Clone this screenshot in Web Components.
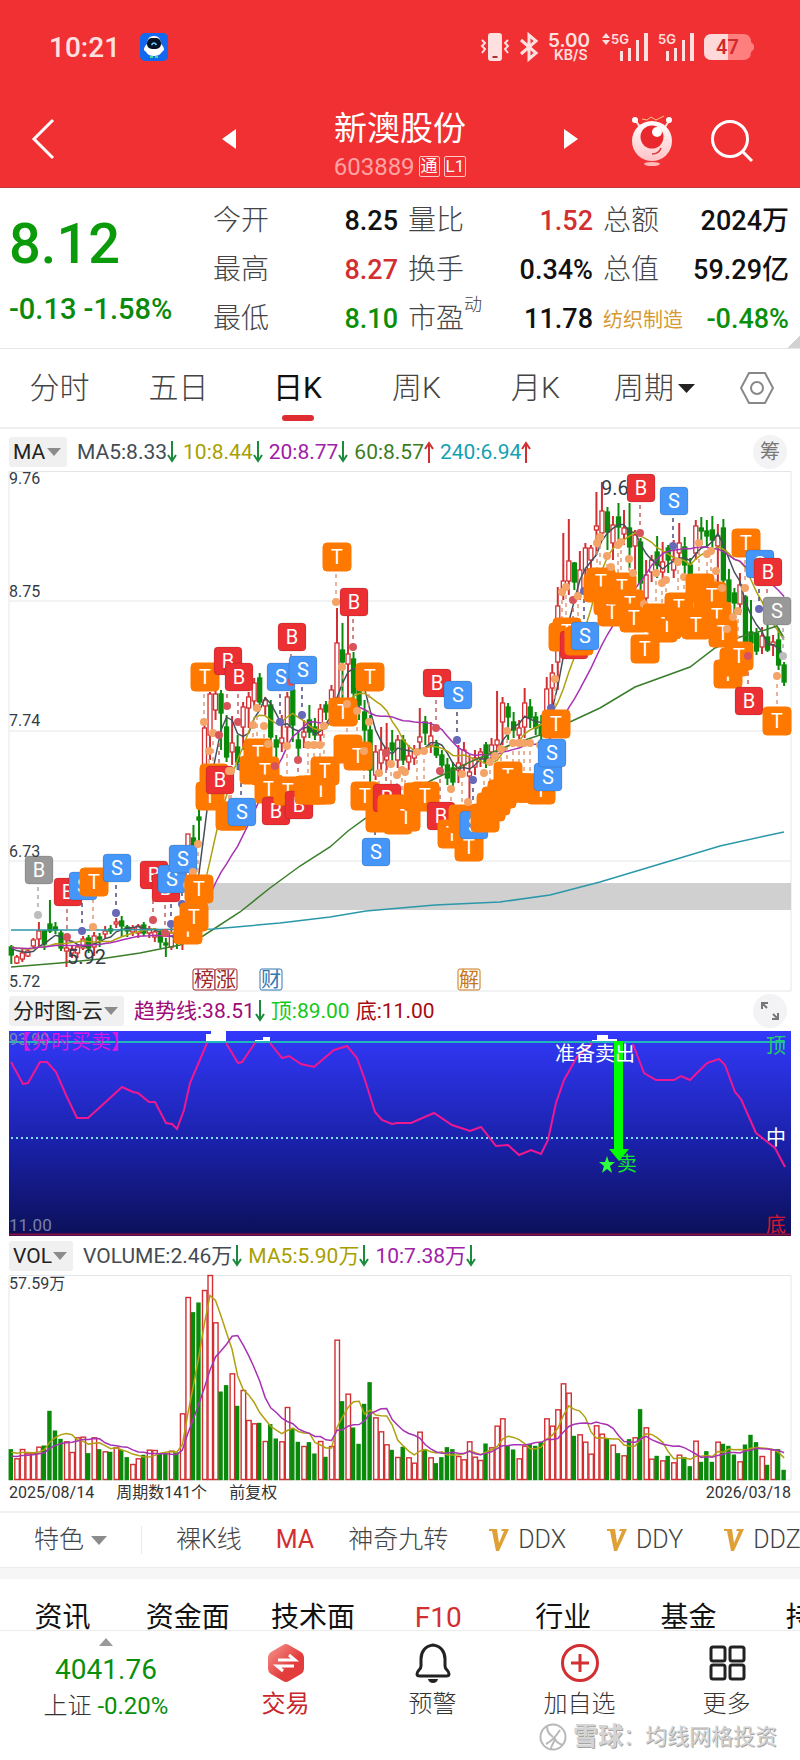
<!DOCTYPE html>
<html lang="zh-CN">
<head>
<meta charset="utf-8">
<meta name="viewport" content="width=device-width, initial-scale=1">
<title>新澳股份 603889</title>
<style>
  body { margin: 0; background: #fff; color: #111; font-family: Roboto, "Noto Sans CJK SC", sans-serif; }
</style>
</head>
<body>

<status-bar></status-bar>
<stock-header code="603889">新澳股份</stock-header>
<quote-panel></quote-panel>
<period-tabs></period-tabs>

<indicator-bar name="MA">
  <indicator-value color="#444b52" dir="down">MA5:8.33</indicator-value>
  <indicator-value color="#a8a000" dir="down">10:8.44</indicator-value>
  <indicator-value color="#a020a8" dir="down">20:8.77</indicator-value>
  <indicator-value color="#3a7d1e" dir="up">60:8.57</indicator-value>
  <indicator-value color="#149fb4" dir="up">240:6.94</indicator-value>
  <round-button slot="action" label="筹码分布">筹</round-button>
</indicator-bar>
<candle-chart></candle-chart>

<indicator-bar name="分时图-云">
  <indicator-value color="#a00a78" dir="down">趋势线:38.51</indicator-value>
  <indicator-value color="#14c81e">顶:89.00</indicator-value>
  <indicator-value color="#a80a14">底:11.00</indicator-value>
  <round-button slot="action" label="全屏">
    <svg width="18" height="18" viewBox="0 0 18 18" fill="none" stroke="#777" stroke-width="2"><path d="M1 7V1h6M1 1l5 5M17 11v6h-6M17 17l-5-5"/></svg>
  </round-button>
</indicator-bar>
<trend-chart></trend-chart>

<indicator-bar name="VOL">
  <indicator-value color="#444b52" dir="down">VOLUME:2.46万</indicator-value>
  <indicator-value color="#a8a000" dir="down">MA5:5.90万</indicator-value>
  <indicator-value color="#a020a8" dir="down">10:7.38万</indicator-value>
</indicator-bar>
<volume-chart></volume-chart>

<feature-bar></feature-bar>
<info-tabs></info-tabs>
<bottom-nav></bottom-nav>

<script>
const RED = '#d22f33';
const GREEN = '#0a8a0a';

// Clase base: mete la plantilla en el shadow root
class BaseElement extends HTMLElement {
  constructor() {
    super();
    this.attachShadow({ mode: 'open' });
  }
  connectedCallback() {
    this.shadowRoot.innerHTML = `<style>
        :host { display: block; }
        * { box-sizing: border-box; }
        button, select { appearance: none; border: 0; margin: 0; padding: 0; background: none; color: inherit; font: inherit; line-height: inherit; cursor: pointer; }
        svg { display: block; overflow: visible; }
      </style>` + this.render();
  }
}

const caret = (w, h, color) =>
  `<svg width="${w}" height="${h}" viewBox="0 0 14 10" preserveAspectRatio="none"><path d="M0 0h14l-7 10z" fill="${color}"/></svg>`;

// **********************************************************************
// => Barra de estado

customElements.define('status-bar', class extends BaseElement {
  render() {
    return `<style>
        :host { background: #f03033; color: #ffe0e0; height: 94px; display: flex; align-items: center; justify-content: space-between; padding: 0 46px 0 49px; box-sizing: border-box; }
        div { display: flex; align-items: center; }
        .left { gap: 20px; }
        .right { gap: 10px; }
        time { font-size: 28px; font-weight: 500; }
        text { font-family: Inter, sans-serif; font-weight: 600; fill: #ffe0e0; }
      </style>
      <div class="left">
        <time>10:21</time>
        <svg width="28" height="28" viewBox="0 0 28 28"><rect width="28" height="28" rx="5" fill="#1268ee"/><path d="M14 3c-6 0-7 5-7 8-3 3-4 6-2 7 1 0 2 5 9 5s8-5 9-5c2-1 1-4-2-7 0-3-1-8-7-8z" fill="#fff"/><rect x="7" y="5" width="14" height="11" rx="5" fill="#061226"/><path d="M11.500 12q2.500-4 5 0" stroke="#5fd0ff" stroke-width="1.500" fill="none"/><path d="M10 24h3M15 24h3" stroke="#46d7a0" stroke-width="2"/></svg>
      </div>
      <div class="right">
        <svg width="29" height="28" viewBox="0 0 29 28" fill="none" stroke="#ffe0e0" stroke-width="2"><rect x="7" y="0" width="14" height="28" rx="3" fill="#ffe0e0" stroke="none"/><path d="M11.500 24h5" stroke="#a33"/><path d="M1 7l3 3-3 3 3 3-3 4M27 7l-3 3 3 3-3 3 3 4"/></svg>
        <svg width="18" height="28" viewBox="0 0 18 28" fill="none" stroke="#ffe0e0" stroke-width="3"><path d="M1 7l15 13-7 6V2l7 6L1 21"/></svg>
        <svg width="44" height="28" viewBox="0 0 44 28"><text x="0" y="14" font-size="19">5.00</text><text x="6" y="27" font-size="14">KB/S</text></svg>
        <svg width="46" height="28" viewBox="0 0 46 28" fill="#ffe0e0"><path d="M0 5l4-5 4 5zM0 7h8l-4 5z"/><text x="9" y="11" font-size="13">5G</text><path d="M18 18h3v10h-3zM26 15h3v13h-3zM34 7h3v21h-3zM42 0h4v28h-4z"/></svg>
        <svg width="36" height="28" viewBox="0 0 36 28" fill="#ffe0e0"><text x="0" y="11" font-size="13">5G</text><path d="M8 18h3v10H8zM16 15h3v13h-3zM24 7h3v21h-3zM32 0h4v28h-4z"/></svg>
        <svg width="50" height="26" viewBox="0 0 50 26"><path d="M8 0h31q8 0 8 8l3 3v4l-3 3q0 8-8 8H8q-8 0-8-8V8q0-8 8-8z" fill="#ff7f7f"/><path d="M8 0h16v26H8q-8 0-8-8V8q0-8 8-8z" fill="#ffd9d9"/><text x="12" y="20" font-size="20" style="fill:#cf2a2e;font-family:Roboto">47</text></svg>
      </div>`;
  }
});

// **********************************************************************
// => Cabecera con el nombre del valor

customElements.define('stock-header', class extends BaseElement {
  render() {
    return `<style>
        :host { background: #f03033; color: #fff; height: 94px; display: grid; grid-template-columns: 205fr 390fr 205fr; align-items: center; border-bottom: 1px solid #c23a3c; box-sizing: border-box; }
        .back { padding-left: 32px; }
        .middle { display: flex; align-items: center; justify-content: space-between; padding: 0 17px; }
        .middle button { padding-bottom: 4px; }
        .title { padding-top: 8px; }
        .right { display: flex; justify-content: flex-end; gap: 38px; padding-right: 47px; }
        h1 { margin: 0; font-size: 33px; line-height: 44px; font-weight: 400; text-align: center; }
        p { margin: 0; display: flex; align-items: center; justify-content: center; gap: 4px; font-size: 24px; line-height: 32px; color: #ffa3a3; }
        p b { font-size: 17px; line-height: 19px; font-weight: 400; border: 1px solid #ffc4c4; color: #fff; border-radius: 2px; padding: 0 1px; }
      </style>
      <div class="back"><button aria-label="返回"><svg width="22" height="40" viewBox="0 0 22 40" fill="none" stroke="#fff" stroke-width="3"><path d="M21 1L2 20l19 19"/></svg></button></div>
      <div class="middle">
        <button aria-label="上一只"><svg width="14" height="20" viewBox="0 0 14 20"><path d="M14 0v20L0 10z" fill="#fff"/></svg></button>
        <div class="title"><h1><slot></slot></h1><p>${this.getAttribute('code')} <b>通</b><b>L1</b></p></div>
        <button aria-label="下一只"><svg width="14" height="20" viewBox="0 0 14 20"><path d="M0 0v20l14-10z" fill="#fff"/></svg></button>
      </div>
      <div class="right">
        <button aria-label="助手"><svg width="42" height="52" viewBox="0 0 42 52">
          <defs><linearGradient id="m" x2="0" y2="1"><stop offset="0" stop-color="#fff"/><stop offset="1" stop-color="#ffc2c6"/></linearGradient></defs>
          <path d="M5 6l4 6M38 6l-4 6" stroke="#ffe0e0" stroke-width="2"/><circle cx="4" cy="5" r="3" fill="#fff"/><circle cx="38" cy="5" r="3" fill="#fff"/>
          <path d="M11 4l5 1 4-3 5 3 8-4" stroke="#ffc080" fill="none"/>
          <circle cx="21" cy="26" r="20" fill="url(#m)"/><circle cx="21" cy="22" r="11.500" fill="#e8282c"/><circle cx="26" cy="17" r="5" fill="#fff"/>
          <path d="M21 39q7 0 9-6" stroke="#d8383c" fill="none" stroke-width="1.500"/><ellipse cx="21" cy="49" rx="8" ry="2" fill="#ffb9b9"/></svg></button>
        <button aria-label="搜索"><svg width="42" height="42" viewBox="0 0 42 42" fill="none" stroke="#fff" stroke-width="3"><circle cx="19" cy="19" r="17.500"/><path d="M31 31l10 10"/></svg></button>
      </div>`;
  }
});

// **********************************************************************
// => Panel de cotización

const QUOTES = [
  [['今开', '8.25', ''], ['最高', '8.27', 'up'], ['最低', '8.10', 'down']],
  [['量比', '1.52', 'up'], ['换手', '0.34%', ''], ['市盈<sup>动</sup>', '11.78', '']],
  [['总额', '2024万', ''], ['总值', '59.29亿', ''], ['<a href="#">纺织制造</a>', '-0.48%', 'down']]
];

customElements.define('quote-panel', class extends BaseElement {
  render() {
    return `<style>
        :host { display: grid; grid-template-columns: 194fr 185fr 185fr 186fr; column-gap: 10px; padding: 8px 11px 5px 9px; border-bottom: 1px solid #e6e6e6;
          background: linear-gradient(135deg, transparent 50%, #d2d2d2 50%) right bottom / 12px 12px no-repeat; }
        .price { color: #0a9a0a; }
        .price strong { display: block; font-size: 56px; line-height: 70px; padding-top: 13px; font-weight: 500; }
        .price span { display: block; font-size: 29px; line-height: 36px; padding-top: 12px; color: #0a8a0a; font-weight: 500; white-space: nowrap; }
        dl { margin: 0; }
        dl div { display: flex; align-items: center; justify-content: space-between; height: 49px; font-size: 28px; line-height: 36px; white-space: nowrap; }
        dt { color: #444; font-weight: 300; position: relative; }
        dd { margin: 0; font-weight: 500; color: #111; font-size: 27px; }
        sup { position: absolute; left: 100%; top: -8px; font-size: 18px; line-height: 24px; }
        a { color: #d79a32; font-size: 20px; text-decoration: none; font-weight: 400; }
        .up { color: ${RED}; } .down { color: #0a8f0a; }
      </style>
      <div class="price"><strong>8.12</strong><span>-0.13 -1.58%</span></div>
      ${QUOTES.map(col => `<dl>${col.map(([k, v, c]) => `<div><dt>${k}</dt><dd class="${c}">${v}</dd></div>`).join('')}</dl>`).join('')}`;
  }
});

// **********************************************************************
// => Pestañas de periodo

customElements.define('period-tabs', class extends BaseElement {
  render() {
    return `<style>
        :host { display: grid; grid-template-columns: repeat(6, 119fr) 86fr; height: 80px; border-bottom: 2px solid #f0f0f0; margin-bottom: 3px; box-sizing: border-box; align-items: stretch; }
        button, label { font-size: 30px; line-height: 40px; color: #444; font-weight: 300; display: flex; align-items: center; justify-content: center; gap: 4px; position: relative; }
        .on { color: #111; font-weight: 400; }
        .on::after { content: ""; position: absolute; left: 50%; margin-left: -16px; bottom: 6px; width: 32px; height: 6px; border-radius: 3px; background: #df2c30; }
      </style>
      <button>分时</button><button>五日</button><button class="on">日K</button><button>周K</button><button>月K</button>
      <label><select aria-label="周期"><option>周期</option></select>${caret(17, 9, '#222')}</label>
      <button aria-label="设置"><svg width="36" height="34" viewBox="0 0 36 34" fill="none" stroke="#888" stroke-width="2"><path d="M10 2h16l8 15-8 15H10L2 17z"/><circle cx="18" cy="17" r="6"/></svg></button>`;
  }
});

// **********************************************************************
// => Fila de indicador: selector + valores + botón

customElements.define('indicator-bar', class extends BaseElement {
  render() {
    const name = this.getAttribute('name');
    return `<style>
        :host { display: flex; align-items: center; height: 39px; padding: 0 13px 0 9px; font-size: 21px; line-height: 30px; color: #222; }
        label { display: flex; align-items: center; gap: 1px; background: #f0f0f0; border-radius: 3px; padding: 0 6px 0 4px; margin-right: 10px; }
        .values { display: flex; gap: 6px; flex: 1; }
      </style>
      <label><select aria-label="指标"><option>${name}</option></select>${caret(14, 8, '#8c8c8c')}</label>
      <div class="values"><slot></slot></div>
      <slot name="action"></slot>`;
  }
});

customElements.define('indicator-value', class extends BaseElement {
  render() {
    const dir = this.getAttribute('dir');
    const d = dir === 'up' ? 'M5 22V2M1 8l4-6 4 6' : 'M5 0v20M1 14l4 6 4-6';
    const arrow = dir ? `<svg width="10" height="22" viewBox="0 0 10 22" fill="none" stroke-width="2" stroke="${dir === 'up' ? '#d22f33' : '#1a8a3c'}"><path d="${d}"/></svg>` : '';
    return `<style>:host { display: flex; align-items: center; white-space: nowrap; color: ${this.getAttribute('color')}; }</style><slot></slot>${arrow}`;
  }
});

customElements.define('round-button', class extends BaseElement {
  render() {
    return `<style>button { width: 34px; height: 34px; border-radius: 17px; background: #f3f2f4; color: #777; font-size: 20px; display: flex; align-items: center; justify-content: center; }</style>
      <button aria-label="${this.getAttribute('label')}"><slot></slot></button>`;
  }
});

// **********************************************************************
// => Datos. Por vela: [color, cuerpo arriba, cuerpo abajo, máximo, mínimo, altura de volumen]

const BARS = [
  ['g',947,955,945,964,89], ['r',957,963,955,964,62], ['r',953,959,948,962,90], ['r',951,956,948,957,77], ['r',940,946,938,948,77],
  ['r',931,939,922,947,97], ['g',931,944,930,950,100], ['g',924,931,900,933,204], ['g',927,930,922,934,145], ['g',933,948,930,951,120],
  ['r',948,951,940,967,113], ['r',949,953,946,958,81], ['r',947,953,944,958,125], ['r',939,948,936,950,127], ['g',938,948,935,953,77],
  ['r',936,947,932,956,125], ['g',937,939,933,947,89], ['r',931,934,926,938,83], ['g',929,931,925,934,81], ['r',922,924,918,928,95],
  ['g',921,926,916,937,87], ['g',927,931,925,937,65], ['r',928,932,925,936,45], ['r',926,933,924,938,62], ['g',925,933,922,936,72],
  ['r',929,933,926,938,88], ['r',932,937,928,942,87], ['g',933,942,930,948,77], ['g',943,945,938,957,77], ['r',933,947,928,950,85],
  ['g',937,942,932,949,79], ['r',920,940,912,950,197], ['r',834,893,834,905,546], ['g',838,850,825,858,500], ['g',817,820,810,842,529],
  ['r',728,770,725,785,567], ['r',694,735,692,760,612], ['r',694,710,690,720,470], ['g',694,713,690,750,262], ['g',727,757,715,762,281],
  ['r',743,752,716,765,317], ['g',747,762,735,770,219], ['r',707,727,702,750,267], ['r',697,708,692,728,177], ['r',683,701,678,710,167],
  ['g',678,702,673,705,168], ['r',700,706,697,715,114], ['g',705,737,700,740,164], ['g',740,747,735,763,121], ['r',738,743,715,752,113],
  ['r',697,727,692,745,216], ['g',690,725,685,742,151], ['g',740,748,730,760,111], ['r',732,737,720,748,99], ['g',720,732,705,738,110],
  ['g',727,735,718,740,76], ['r',709,735,704,742,114], ['g',705,712,701,720,66], ['r',690,712,685,722,99], ['r',643,698,608,710,418],
  ['g',650,662,623,700,233], ['r',654,664,615,700,256], ['g',659,693,652,710,154], ['g',688,705,680,720,105], ['g',712,730,700,745,225],
  ['g',730,770,715,785,290], ['r',752,775,745,780,185], ['r',750,763,727,775,143], ['r',748,760,723,770,104], ['g',743,750,730,762,87],
  ['r',740,760,735,768,66], ['g',740,760,735,765,96], ['r',756,762,745,770,65], ['r',752,758,745,765,49], ['r',737,742,708,750,142],
  ['g',722,733,716,745,89], ['r',736,745,722,753,65], ['g',745,755,740,758,47], ['g',755,765,750,775,65], ['g',765,778,758,785,95],
  ['g',768,782,762,787,89], ['r',763,770,745,783,69], ['r',750,765,742,775,59], ['r',772,776,755,800,113], ['r',758,767,750,775,67],
  ['r',752,758,748,767,57], ['g',745,763,742,768,106], ['r',745,752,738,760,95], ['r',740,745,691,750,160], ['r',703,722,697,745,182],
  ['g',707,717,703,740,99], ['g',722,730,712,738,88], ['r',728,735,720,740,62], ['r',703,727,688,738,100], ['g',707,718,699,728,105],
  ['g',717,728,712,735,99], ['g',725,735,715,740,111], ['r',689,720,677,735,182], ['r',673,688,664,720,160], ['r',606,662,587,690,209],
  ['r',581,593,533,600,287], ['r',561,581,519,595,259], ['g',563,582,562,590,129], ['r',570,593,551,600,134], ['r',548,570,543,580,112],
  ['r',548,560,545,575,76], ['r',526,530,492,555,161], ['r',511,533,482,540,136], ['g',512,532,507,550,122], ['r',525,543,516,560,103],
  ['g',517,527,503,545,77], ['r',528,534,510,545,71], ['g',528,547,503,568,119], ['r',535,546,530,570,125], ['g',542,583,538,600,209],
  ['r',575,598,560,605,155], ['r',560,572,555,582,61], ['g',552,565,536,578,69], ['r',562,572,542,580,56], ['g',548,560,545,573,69],
  ['r',560,570,540,578,50], ['r',543,553,523,565,73], ['g',547,565,537,575,65], ['g',565,575,558,580,38], ['r',526,553,520,560,115],
  ['g',528,531,517,545,51], ['g',531,536,520,548,83], ['g',530,540,516,550,51], ['r',536,546,524,600,112], ['g',528,580,519,583,105],
  ['g',580,602,569,620,99], ['g',593,603,588,615,73], ['r',585,604,573,615,53], ['g',597,642,595,648,103], ['g',632,643,600,655,132],
  ['g',633,651,628,655,110], ['r',636,647,627,654,69], ['g',637,650,620,652,42], ['r',642,645,635,656,89], ['g',640,665,628,670,89],
  ['g',665,682,662,686,27]
];
const barX = i => 11.3 + i * 5.52;

// Señales: [x, y del punto, tipo, sentido]. T naranja (t sin letra), B rojo, S azul, b/s gris
const MARKS = [
  [38,915,'b',-1],[67,937,'B',-1],[82,931,'S',-1],[93,927,'T',-1],[116,913,'S',-1],[153,920,'B',-1],[165,933,'B',-1],[171,924,'S',-1],
  [182,904,'S',-1],[187,885,'T',1],[193,872,'T',1],[198,844,'T',1],[204,722,'T',-1],[209,751,'T',1],[213,733,'t',1],[219,735,'B',1],[227,706,'B',-1],
  [229,771,'t',1],[231,771,'t',1],[238,722,'B',-1],[241,767,'S',1],[253,725,'t',1],[257,708,'T',1],[264,726,'T',1],[268,744,'T',1],[275,766,'B',1],
  [280,722,'S',-1],[287,746,'T',1],[291,682,'B',-1],[298,760,'B',1],[302,715,'S',-1],[308,745,'t',1],[314,745,'t',1],[320,745,'T',1],[324,726,'T',1],
  [336,602,'T',-1],[342,667,'T',1],[347,704,'t',1],[353,647,'B',-1],[357,711,'T',1],[364,751,'T',1],[369,722,'T',-1],[375,807,'S',1],
  [379,773,'t',1],[386,753,'B',1],[391,764,'t',1],[397,775,'t',1],[402,770,'t',1],[405,772,'T',1],[417,752,'t',1],[424,751,'T',1],[436,728,'B',-1],
  [440,771,'B',1],[451,789,'T',1],[457,740,'S',-1],[462,774,'t',1],[468,802,'T',1],[473,780,'S',1],[484,773,'t',1],[490,762,'t',1],
  [495,756,'t',1],[501,749,'t',1],[507,731,'T',1],[513,743,'t',1],[519,743,'t',1],[524,743,'t',1],[530,743,'t',1],[540,745,'T',1],
  [547,732,'S',1],[551,708,'S',1],[555,679,'T',1],[562,592,'t',1],[566,587,'T',1],[573,600,'B',1],[578,596,'t',1],[584,591,'S',1],
  [597,543,'t',1],[600,537,'T',1],[607,556,'t',1],[611,567,'T',1],[618,545,'t',1],[621,542,'T',1],[629,559,'T',1],[633,573,'T',1],
  [640,533,'B',-1],[644,604,'T',1],[656,573,'t',1],[662,583,'t',1],[666,580,'T',1],[673,546,'S',-1],[678,562,'T',1],[684,577,'t',1],
  [695,580,'T',1],[699,543,'t',1],[707,554,'t',1],[711,551,'T',1],[716,571,'T',1],[722,588,'T',1],[727,629,'T',1],[733,617,'t',1],
  [738,611,'T',1],[745,588,'T',-1],[748,656,'B',1],[759,609,'S',-1],[767,617,'B',-1],[783,656,'s',-1],[777,676,'T',1]
];
const MARK_COLORS = {
  T: ['#ff7800', '#f5a468', '#e09a78'], B: ['#eb2f32', '#d8545c', '#c06060'], S: ['#4596f8', '#6868b8', '#4a4a80'],
  b: ['#999', '#bdbdbd', '#aaa'], s: ['#999', '#bdbdbd', '#aaa']
};
MARK_COLORS.t = MARK_COLORS.T;

// Media móvil sobre una serie ya en píxeles
function movingAverage(values, n, before) {
  return values.map((v, i) => {
    let sum = 0;
    for (let k = 0; k < n; k++) sum += i - k < 0 ? before : values[i - k];
    return sum / n;
  });
}
const line = (values, color) =>
  `<polyline fill="none" stroke="${color}" stroke-width="1.500" points="${values.map((v, i) => barX(i).toFixed(1) + ',' + v.toFixed(1)).join(' ')}"/>`;

// **********************************************************************
// => Gráfico de velas

customElements.define('candle-chart', class extends BaseElement {
  candles() {
    return BARS.map(([c, top, bottom, high, low], i) => {
      const x = barX(i);
      const color = c === 'r' ? RED : GREEN;
      return `<path d="M${x} ${high}V${low}" stroke="${color}" stroke-width="2"/>` +
        `<rect x="${x - 2}" y="${top}" width="4" height="${bottom - top}" fill="${c === 'r' ? '#fff' : color}" stroke="${color}" stroke-width="1.300"/>`;
    }).join('');
  }
  marks() {
    const stems = MARKS.map(([x, y, t, d]) => `<path d="M${x} ${y}v${d * 30}" stroke="${MARK_COLORS[t][2]}" stroke-width="1.500" stroke-dasharray="4 4"/>`);
    const tags = MARKS.map(([x, y, t, d]) => {
      const cx = Math.min(x + 1, 777), cy = y + d * 45;
      const edge = t === 'T' || t === 't' ? '#ff7800' : '#0002';
      return `<circle cx="${x}" cy="${y}" r="4" fill="${MARK_COLORS[t][1]}"/>` +
        `<rect x="${cx - 14}" y="${cy - 14}" width="28" height="28" rx="4" fill="${MARK_COLORS[t][0]}" stroke="${edge}"/>` +
        (t === 't' ? '' : `<text x="${cx}" y="${cy + 7}" class="tag">${t.toUpperCase()}</text>`);
    });
    return stems.join('') + tags.join('');
  }
  events() {
    return [['榜', 204, '#a02828'], ['涨', 226, '#a02828'], ['财', 271, '#2f78b4'], ['解', 469, '#c87818']].map(([t, x, c]) =>
      `<rect x="${x - 11}" y="969" width="22" height="21" rx="2" fill="#fff" stroke="${c}"/><text x="${x}" y="987" class="event" style="fill:${c}">${t}</text>`).join('');
  }
  render() {
    const close = BARS.map(b => b[0] === 'r' ? b[1] : b[2]);
    return `<style>
        svg { width: 100%; height: auto; }
        text { font-size: 16px; fill: #333b46; }
        .tag { font-size: 20px; fill: #fff; text-anchor: middle; }
        .event { font-size: 20px; text-anchor: middle; }
        .peak { font-size: 20px; }
      </style>
      <svg viewBox="0 471 800 520">
        <path d="M9 471.500H791V991H9zM9 601H791M9 731H791M9 861H791" fill="none" stroke="#e3e6e8"/>
        <rect x="205" y="883" width="586" height="27" fill="#d0d0d0"/>
        ${this.candles()}
        ${line(movingAverage(close, 5, 947), '#44505c')}
        ${line(movingAverage(close, 10, 946), '#b0a010')}
        ${line(movingAverage(close, 20, 947), '#a832b4')}
        <polyline fill="none" stroke="#3a7d2a" stroke-width="1.500" points="11,967 60,963 100,959 140,953 180,945 203,936 240,912 270,888 300,866 330,847 348,831 366,818 400,798 432,780 470,762 510,745 540,735 572,721 600,708 635,687 690,667 715,648 740,637 765,630 777,626 784,638"/>
        <polyline fill="none" stroke="#2a98a8" stroke-width="1.500" points="11,930 100,930 213,929 280,923 330,917 366,911 435,905 500,902 550,895 600,882 660,864 720,846 765,836 784,832"/>
        <text class="peak" x="601" y="495">9.6</text><text class="peak" x="67" y="964">5.92</text>
        ${this.marks()}
        <text x="9" y="484">9.76</text><text x="9" y="597">8.75</text><text x="9" y="726">7.74</text><text x="9" y="857">6.73</text><text x="9" y="987">5.72</text>
        ${this.events()}
      </svg>`;
  }
});

// **********************************************************************
// => Línea de tendencia sobre fondo azul

customElements.define('trend-chart', class extends BaseElement {
  render() {
    return `<style>
        svg { width: 100%; height: auto; }
        text { font-size: 20px; }
      </style>
      <svg viewBox="0 1030 800 206">
        <defs><linearGradient id="bg" x2="0" y2="1"><stop offset="0" stop-color="#3239fa"/><stop offset=".55" stop-color="#1a21a8"/><stop offset="1" stop-color="#0c1058"/></linearGradient></defs>
        <rect x="9" y="1031" width="782" height="205" fill="url(#bg)"/>
        <path d="M9 1042H785" stroke="#20b8b8" stroke-width="2"/>
        <path d="M11 1138H765" stroke="#80e0f0" stroke-width="2" stroke-dasharray="2 3"/>
        <path d="M9 1234.500H791" stroke="#8a1040" stroke-width="2"/>
        <polyline fill="none" stroke="#f01890" stroke-width="2" points="11,1062 23,1084 28,1083 40,1062 47,1062 56,1072 66,1095 77,1118 88,1118 110,1098 122,1087 133,1092 138,1093 149,1102 155,1102 166,1123 172,1124 177,1129 184,1110 190,1083 199,1062 207,1043"/>
        <polyline fill="none" stroke="#f01890" stroke-width="2" points="226,1043 238,1063 242,1062 255,1043"/>
        <polyline fill="none" stroke="#f01890" stroke-width="2" points="270,1043 282,1058 289,1056 301,1064 314,1067 334,1050 347,1046 357,1058 365,1080 375,1112 382,1120 392,1124 397,1123 411,1123 434,1113 452,1125 470,1131 481,1127 496,1146 508,1145 519,1155 531,1150 541,1154 548,1140 556,1103 564,1080 577,1057 592,1043"/>
        <polyline fill="none" stroke="#f01890" stroke-width="2" points="633,1044 644,1073 656,1080 674,1080 681,1076 690,1080 707,1063 719,1059 725,1065 735,1092 741,1099 756,1133 775,1148 785,1167"/>
        <path d="M206 1041v-7h5v-4h15v11zM255 1041v-1h8v-3h7v4zM592 1041v-1h5v-5h11v4h9v2z" fill="#fff"/>
        <text x="9" y="1045" fill="#8088a8" style="font-size:16px">93.90</text>
        <text x="11" y="1049" fill="#d818e0">【分时买卖】</text>
        <path d="M614 1041h9v108h6l-10 12-10-12h5z" fill="#0f0"/>
        <text x="555" y="1061" fill="#fff">准备卖出</text>
        <path d="M607 1156l2 6h6l-5 4 2 7-5-4-5 4 2-7-5-4h6z" fill="#2eff3c"/>
        <text x="617" y="1171" fill="#10e828">卖</text>
        <text x="766" y="1053" fill="#20d068">顶</text>
        <text x="766" y="1145" fill="#fff">中</text>
        <text x="766" y="1232" fill="#d01830">底</text>
        <text x="9" y="1231" fill="#7880a8" style="font-size:17px">11.00</text>
      </svg>`;
  }
});

// **********************************************************************
// => Volumen

customElements.define('volume-chart', class extends BaseElement {
  render() {
    const tops = BARS.map(b => 1479 - b[5] / 3);
    const bars = BARS.map(([c], i) => {
      const color = c === 'r' ? RED : GREEN;
      return `<rect x="${barX(i) - 2}" y="${tops[i] + .5}" width="${c === 'r' ? 4.5 : 3}" height="${1479 - tops[i]}" fill="${c === 'r' ? '#fff' : color}" stroke="${color}" stroke-width="1.400"/>`;
    }).join('');
    return `<style>
        svg { width: 100%; height: auto; }
        text { font-size: 16px; fill: #333b46; }
        footer { display: flex; gap: 22px; padding: 1px 9px 6px; font-size: 16px; line-height: 24px; color: #333; }
        footer span:last-child { margin-left: auto; }
      </style>
      <svg viewBox="0 1275 800 205">
        <path d="M9 1275.500H791V1480H9z" fill="none" stroke="#e3e6e8"/>
        ${bars}
        ${line(movingAverage(tops, 5, 1453), '#b0a010')}
        ${line(movingAverage(tops, 10, 1457), '#a832b4')}
        <text x="9" y="1289">57.59万</text>
      </svg>
      <footer><span>2025/08/14</span><span>周期数141个</span><span>前复权</span><span>2026/03/18</span></footer>`;
  }
});

// **********************************************************************
// => Barra de indicadores especiales

customElements.define('feature-bar', class extends BaseElement {
  render() {
    const vip = `<svg width="24" height="22" viewBox="0 0 24 22"><path d="M4 0h8l2 14L19 2h-3l1-2h7L14 22h-3L7 2H4z" fill="#e0a038"/></svg>`;
    return `<style>
        :host { display: flex; align-items: center; gap: 34px; height: 57px; border-top: 2px solid #f0f0f0; border-bottom: 1px solid #ececec; padding-left: 34px; overflow: hidden; box-sizing: border-box; font-size: 25px; line-height: 34px; color: #444; font-weight: 300; white-space: nowrap; }
        label, button { display: flex; align-items: center; gap: 6px; flex: none; }
        .vip { padding-left: 3px; gap: 9px; }
        i { width: 1px; height: 28px; background: #ececec; flex: none; }
        .on { color: ${RED}; font-weight: 400; }
      </style>
      <label><select aria-label="特色"><option>特色</option></select>${caret(16, 9, '#8c8c8c')}</label><i></i>
      <button>裸K线</button><button class="on">MA</button><button>神奇九转</button>
      ${['DDX', 'DDY', 'DDZ'].map(t => `<button class="vip">${vip}${t}</button>`).join('')}`;
  }
});

customElements.define('info-tabs', class extends BaseElement {
  render() {
    return `<style>
        :host { border-top: 11px solid #f6f6f6; overflow: hidden; height: 62px; box-sizing: border-box; }
        nav { display: flex; padding-top: 23px; }
        a { flex: none; width: 15.65%; text-align: center; font-size: 28px; line-height: 32px; color: #111; text-decoration: none; white-space: nowrap; }
        .on { color: ${RED}; }
      </style>
      <nav>${['资讯', '资金面', '技术面', 'F10', '行业', '基金', '持仓'].map(t => `<a href="#"${t === 'F10' ? ' class="on"' : ''}>${t}</a>`).join('')}</nav>`;
  }
});

// **********************************************************************
// => Navegación inferior

customElements.define('bottom-nav', class extends BaseElement {
  render() {
    return `<style>
        :host { display: block; border-top: 1px solid #ececec; }
        nav { display: grid; grid-template-columns: 212fr repeat(4, 147fr); }
        button, .index { display: flex; flex-direction: column; align-items: center; font-size: 24px; line-height: 32px; color: #333; font-weight: 300; }
        button { padding-top: 12px; gap: 5px; }
        .index { padding-top: 7px; text-decoration: none; }
        .index b { font-size: 28px; line-height: 36px; padding: 6px 0 2px; font-weight: 400; }
        .down { color: #0a8f0a; font-weight: 400; }
        .trade { color: #c8262a; font-weight: 400; }
        footer { display: flex; align-items: center; justify-content: flex-end; padding: 0 23px 10px 0; font-size: 22px; line-height: 30px; color: #d4d4d4; text-shadow: 1px 1px 0 #a4a4a4; }
        footer svg { margin-right: 6px; }
        footer b { font-size: 25px; font-weight: 700; }
      </style>
      <nav>
        <a class="index" href="#"><svg width="14" height="8" viewBox="0 0 14 8"><path d="M7 0l7 8H0z" fill="#999"/></svg><b class="down">4041.76</b><span>上证 <span class="down">-0.20%</span></span></a>
        <button class="trade"><svg width="38" height="40" viewBox="0 0 38 40"><defs><linearGradient id="t" x2="1" y2="1"><stop offset="0" stop-color="#f79a92"/><stop offset=".6" stop-color="#e23c3c"/></linearGradient></defs><path d="M16 2q3-2 6 0l12 7q3 2 3 5v12q0 3-3 5l-12 7q-3 2-6 0L4 31q-3-2-3-5V14q0-3 3-5z" fill="url(#t)"/><path d="M11 17h17l-6-5M27 23H10l6 5" fill="none" stroke="#fff" stroke-width="3"/></svg>交易</button>
        <button><svg width="38" height="40" viewBox="0 0 38 40" fill="none" stroke="#222" stroke-width="3"><path d="M19 2C11 3 7 9 7 16v7c0 4-4 4-4 8 0 1 1 2 3 2h26c2 0 3-1 3-2 0-4-4-4-4-8v-7c0-7-4-13-12-14z" stroke-linejoin="round"/><path d="M14 36h10q-1 4-5 4t-5-4z" fill="#222" stroke="none"/></svg>预警</button>
        <button><svg width="38" height="40" viewBox="0 0 38 40" fill="none" stroke="#d22f33" stroke-width="3"><circle cx="19" cy="20" r="17.500"/><path d="M19 11v18M10 20h18"/></svg>加自选</button>
        <button><svg width="38" height="40" viewBox="0 0 38 40" fill="none" stroke="#222" stroke-width="3"><rect x="3" y="4" width="14" height="14" rx="2"/><rect x="22" y="4" width="14" height="14" rx="2"/><rect x="3" y="22" width="14" height="14" rx="2"/><rect x="22" y="22" width="14" height="14" rx="2"/></svg>更多</button>
      </nav>
      <footer><svg width="28" height="28" viewBox="0 0 28 28" fill="none" stroke="#b8b8b8" stroke-width="2"><circle cx="14" cy="14" r="12.500"/><path d="M8 3c0 6 2 8 6 11M7 21c4-2 9-6 14-14M12 26c0-4 3-6 4-10 2 4 4 5 8 6"/></svg><b>雪球</b>：均线网格投资</footer>`;
  }
});
</script>
</body>
</html>
